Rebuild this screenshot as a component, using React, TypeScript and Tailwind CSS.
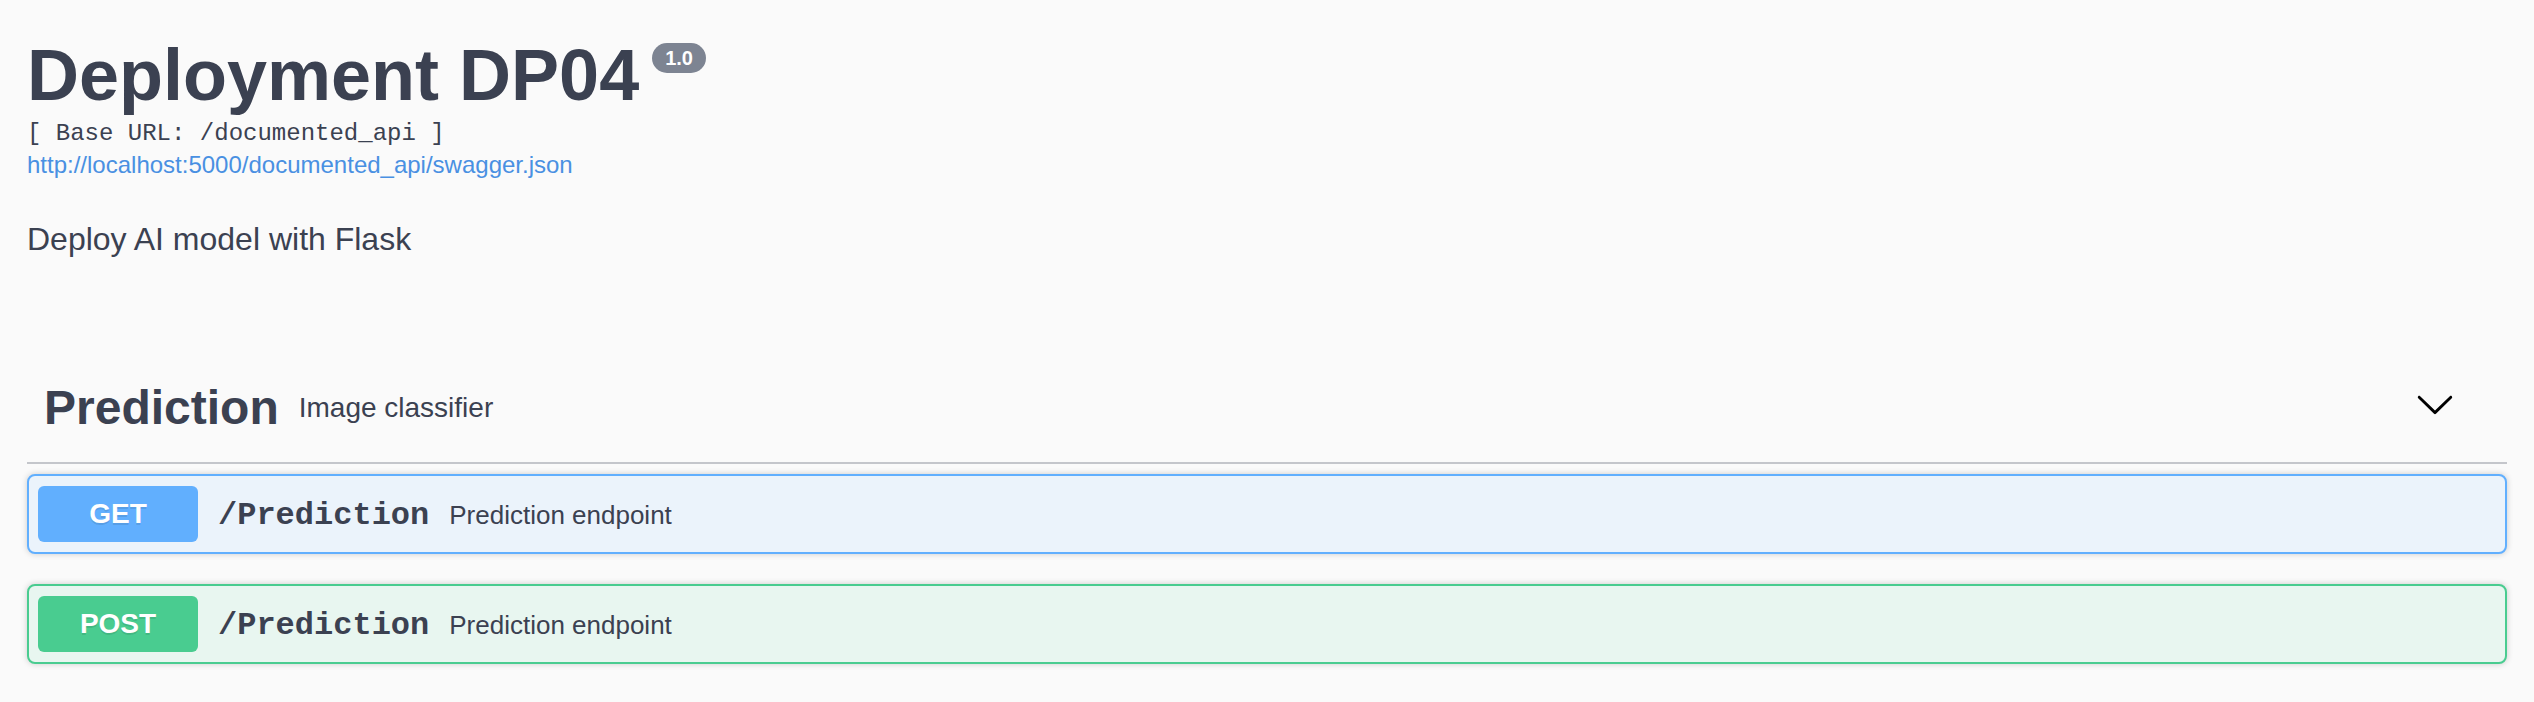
const SANS = "font-['Liberation_Sans',Arial,sans-serif]";
const MONO = "font-['Liberation_Mono','Courier_New',monospace]";

type Op = {
  method: string;
  path: string;
  summary: string;
  box: string;
  badge: string;
};

const OPS: Op[] = [
  {
    method: 'GET',
    path: '/Prediction',
    summary: 'Prediction endpoint',
    box: 'border-[#61affe] bg-[#ebf3fb]',
    badge: 'bg-[#61affe]',
  },
  {
    method: 'POST',
    path: '/Prediction',
    summary: 'Prediction endpoint',
    box: 'border-[#49cc90] bg-[#e8f6f0]',
    badge: 'bg-[#49cc90]',
  },
];

function Chevron() {
  return (
    <svg width="40" height="40" viewBox="0 0 20 20" className="mb-[8px] mr-[52px] shrink-0" fill="#000">
      <path d="M17.418 6.109c.272-.268.709-.268.979 0s.271.701 0 .969l-7.908 7.83c-.27.268-.707.268-.979 0l-7.908-7.83c-.27-.268-.27-.701 0-.969.271-.268.709-.268.979 0L10 13.25l7.418-7.141z" />
    </svg>
  );
}

function OpBlock({ op }: { op: Op }) {
  return (
    <div className={`flex items-center rounded-[8px] border-2 p-[10px] shadow-[0_0_6px_rgba(0,0,0,0.19)] ${op.box}`}>
      <span
        className={`-ml-px flex h-[56px] w-[160px] shrink-0 items-center justify-center rounded-[6px] text-[28px] font-bold text-white [text-shadow:0_2px_0_rgba(0,0,0,0.1)] ${op.badge}`}
      >
        {op.method}
      </span>
      <span className={`${MONO} mt-[3px] px-[20px] text-[32px] font-bold leading-[40px] text-[#3b4151]`}>{op.path}</span>
      <span className="mt-[1px] text-[26px] leading-[32px] text-[#3b4151]">{op.summary}</span>
    </div>
  );
}

export default function App() {
  return (
    <div className={`${SANS} min-h-screen bg-[#fafafa] px-[27px] text-[#3b4151]`}>
      {/* info */}
      <div className="pt-[35px]">
        <div className="flex items-start">
          <h1 className="text-[72px] font-bold leading-[80px]">Deployment DP04</h1>
          <span className="ml-[13px] mt-[8px] rounded-full bg-[#7d8492] px-[13px] py-[4px] text-[20px] font-bold leading-[22px] text-white">
            1.0
          </span>
        </div>
        <div className={`${MONO} mt-[5px] text-[24px] leading-[28px]`}>[ Base URL: /documented_api ]</div>
        <a href="#" className="mt-[3px] block text-[24px] leading-[28px] text-[#4990e2]">
          http://localhost:5000/documented_api/swagger.json
        </a>
        <p className="mt-[42px] text-[32px] leading-[36px]">Deploy AI model with Flask</p>
      </div>

      {/* tag */}
      <div className="mt-[97px] flex h-[110px] items-center border-b-2 border-[#c4c6cb] pl-[17px]">
        <h3 className="text-[48px] font-bold leading-[56px]">Prediction</h3>
        <span className="px-[20px] text-[28px] leading-[32px]">Image classifier</span>
        <div className="flex-1" />
        <Chevron />
      </div>

      <div className="mt-[10px] flex flex-col gap-[30px]">
        {OPS.map((op) => (
          <OpBlock key={op.method} op={op} />
        ))}
      </div>
    </div>
  );
}
